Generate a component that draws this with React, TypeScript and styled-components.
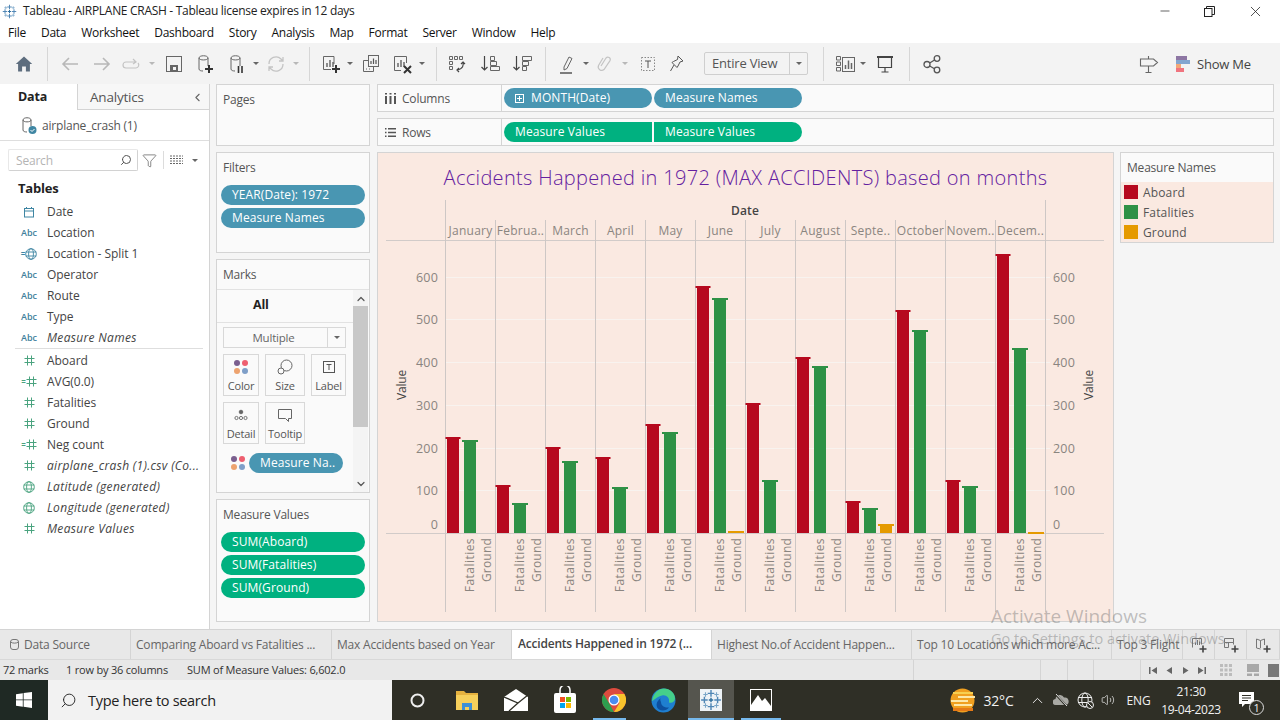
import React from 'react';
import styled, { createGlobalStyle } from 'styled-components';
import { ChevronLeft, ChevronUp, ChevronDown, Search, Filter, Minus, X, Volume2 } from 'lucide-react';

const UI = '"Open Sans", "Noto Sans", sans-serif';

const GlobalStyle = createGlobalStyle`
  html, body { margin: 0; padding: 0; background: #f5f5f5; }
  * { box-sizing: border-box; }
  body { font-family: ${UI}; font-size: 12px; color: #444; letter-spacing: -0.2px; }
`;

const Page = styled.div`
  position: relative;
  width: 1280px;
  height: 720px;
  overflow: hidden;
  display: flex;
  flex-direction: column;
`;

/* window chrome */
const TitleBar = styled.div`
  height: 22px;
  background: #fff;
  display: flex;
  align-items: center;
  padding-left: 1px;
  color: #222;
  font-size: 12px;
`;
const TitleText = styled.span`
  flex: 1;
  margin: -1px 0 0 6px;
  letter-spacing: -0.3px;
`;
const WinButton = styled.div<{ $w: number }>`
  width: ${({ $w }) => $w}px;
  display: flex;
  justify-content: center;
  color: #222;
`;
const MenuBar = styled.div`
  height: 21px;
  background: #fff;
  display: flex;
  align-items: center;
  gap: 15px;
  padding-left: 8px;
  color: #111;
  font-size: 12px;
  letter-spacing: -0.26px;
`;
const Toolbar = styled.div`
  height: 41px;
  background: #f3f3f3;
  display: flex;
  align-items: center;
  padding: 0 22px 0 8px;
  flex-shrink: 0;
`;
const ToolSlot = styled.div<{ $w: number }>`
  width: ${({ $w }) => $w}px;
  display: flex;
  justify-content: center;
  align-items: center;
  flex-shrink: 0;
`;
const ToolSep = styled.div<{ $l: number; $r: number }>`
  width: 1px;
  height: 34px;
  background: #d6d6d6;
  margin-left: ${({ $l }) => $l}px;
  margin-right: ${({ $r }) => $r}px;
  flex-shrink: 0;
`;
const Caret = styled.span<{ $dim?: boolean }>`
  width: 0;
  height: 0;
  border-left: 3px solid transparent;
  border-right: 3px solid transparent;
  border-top: 3px solid ${({ $dim }) => ($dim ? '#b8b8b8' : '#666')};
`;
const FitSelect = styled.div`
  margin-left: 16px;
  width: 104px;
  height: 23px;
  border: 1px solid #cfcfcf;
  border-radius: 2px;
  display: flex;
  align-items: center;
  color: #555;
  font-size: 13px;
  flex-shrink: 0;
`;
const FitLabel = styled.span`
  flex: 1;
  padding-left: 7px;
  margin-top: -2px;
`;
const FitArrow = styled.span`
  width: 18px;
  height: 100%;
  border-left: 1px solid #cfcfcf;
  display: flex;
  align-items: center;
  justify-content: center;
`;
const ToolSpacer = styled.div`
  flex: 1;
`;
const ShowMe = styled.div`
  display: flex;
  align-items: center;
  gap: 7px;
  width: 82px;
  margin-left: 16px;
  color: #444;
  font-size: 13px;
  white-space: nowrap;
`;

/* main area */
const Main = styled.div`
  height: 546px;
  display: flex;
  background: #f5f5f5;
  border-bottom: 1px solid #d4d4d4;
`;
const DataPane = styled.div`
  width: 210px;
  background: #fff;
  border-right: 1px solid #d4d4d4;
  display: flex;
  flex-direction: column;
  flex-shrink: 0;
`;
const PaneTabs = styled.div`
  height: 26px;
  display: flex;
`;
const DataTab = styled.div`
  width: 78px;
  padding: 4px 0 0 18px;
  font-weight: 700;
  color: #222;
  border-right: 1px solid #d4d4d4;
  font-size: 12.5px;
`;
const AnalyticsTab = styled.div`
  flex: 1;
  display: flex;
  justify-content: space-between;
  padding: 4px 5px 0 12px;
  background: #f7f7f7;
  border-bottom: 1px solid #d4d4d4;
  color: #555;
  font-size: 13.5px;
`;
const SourceRow = styled.div`
  height: 31px;
  border-bottom: 1px solid #dedede;
  display: flex;
  align-items: center;
  padding-left: 20px;
  gap: 3px;
  color: #555;
  font-size: 12px;
`;
const SearchRow = styled.div`
  display: flex;
  align-items: center;
  padding: 8px 0 0 8px;
  height: 30px;
`;
const SearchBox = styled.div`
  width: 130px;
  height: 22px;
  border: 1px solid #d2d2d2;
  border-top-color: #e8e8e8;
  border-left-color: #e8e8e8;
  border-radius: 2px;
  display: flex;
  align-items: center;
  justify-content: space-between;
  padding: 0 5px 0 7px;
  color: #b4b4b4;
  font-size: 12px;
`;
const SearchTools = styled.div`
  display: flex;
  align-items: center;
  margin-left: 4px;
`;
const ThinSep = styled.div`
  width: 1px;
  height: 18px;
  background: #dcdcdc;
  margin: 0 6px 0 6px;
`;
const TablesHead = styled.div`
  font-weight: 700;
  font-size: 13px;
  color: #222;
  padding: 8px 0 0 18px;
  height: 30px;
`;
const FieldRow = styled.div<{ $italic?: boolean }>`
  height: 21px;
  display: flex;
  align-items: center;
  padding-left: 18px;
  font-size: 12px;
  color: #444;
  font-style: ${({ $italic }) => ($italic ? 'italic' : 'normal')};
  letter-spacing: ${({ $italic }) => ($italic ? '0.32px' : '-0.04px')};
  white-space: nowrap;
`;
const FieldIcon = styled.span<{ $color: string }>`
  width: 22px;
  margin-right: 7px;
  display: flex;
  justify-content: center;
  align-items: center;
  font-size: 9px;
  font-weight: 600;
  font-style: normal;
  color: ${({ $color }) => $color};
  letter-spacing: 0;
`;
const FieldDivider = styled.div`
  height: 1px;
  margin: 0 6px 1px 15px;
  background: #dedede;
`;

const CardColumn = styled.div`
  width: 154px;
  margin-left: 6px;
  display: flex;
  flex-direction: column;
  gap: 6px;
  flex-shrink: 0;
`;
const Card = styled.div<{ $h: number }>`
  height: ${({ $h }) => $h}px;
  background: #fafafa;
  border: 1px solid #d4d4d4;
  display: flex;
  flex-direction: column;
  flex-shrink: 0;
`;
const CardTitle = styled.div`
  padding: 6px 0 0 6px;
  height: 31px;
  color: #555;
  font-size: 12px;
`;
const PillStack = styled.div`
  display: flex;
  flex-direction: column;
  gap: 3px;
  padding: 1px 4px 0 4px;
`;
const Pill = styled.div<{ $tone: 'blue' | 'green'; $w?: number; $shape?: 'left' | 'right' }>`
  height: 20px;
  width: ${({ $w }) => ($w ? `${$w}px` : '100%')};
  background: ${({ $tone }) => ($tone === 'blue' ? '#4996b2' : '#00b180')};
  border-radius: ${({ $shape }) =>
    $shape === 'left' ? '10px 0 0 10px' : $shape === 'right' ? '0 10px 10px 0' : '10px'};
  color: #fff;
  font-size: 12px;
  line-height: 18px;
  letter-spacing: 0.1px;
  padding-left: 11px;
  display: flex;
  align-items: center;
  gap: 7px;
  white-space: nowrap;
  flex-shrink: 0;
`;

const MarksTitle = styled(CardTitle)`
  height: 30px;
  border-bottom: 1px solid #e2e2e2;
`;
const MarksBody = styled.div`
  flex: 1;
  display: flex;
  min-height: 0;
`;
const MarksContent = styled.div`
  width: 136px;
  display: flex;
  flex-direction: column;
`;
const AllRow = styled.div`
  height: 33px;
  border-bottom: 1px solid #e2e2e2;
  padding-left: 36px;
  font-weight: 700;
  color: #222;
  font-size: 12.5px;
  line-height: 29px;
`;
const MarkSelect = styled.div`
  margin: 4px 0 0 6px;
  width: 123px;
  height: 21px;
  border: 1px solid #d8d8d8;
  background: #fafafa;
  display: flex;
  align-items: center;
  color: #666;
  font-size: 11.5px;
`;
const MarkSelectLabel = styled.span`
  flex: 1;
  text-align: center;
  padding-right: 4px;
`;
const MarkSelectArrow = styled.span`
  width: 18px;
  height: 100%;
  border-left: 1px solid #d8d8d8;
  display: flex;
  align-items: center;
  justify-content: center;
`;
const MarkGrid = styled.div`
  display: grid;
  grid-template-columns: 36px 40px 35px;
  grid-auto-rows: 42px;
  column-gap: 6px;
  row-gap: 6px;
  margin: 6px 0 0 6px;
`;
const MarkButton = styled.div`
  border: 1px solid #d8d8d8;
  background: #fafafa;
  display: flex;
  flex-direction: column;
  align-items: center;
  padding-top: 4px;
  font-size: 11px;
  color: #555;
  height: 42px;
  gap: 3px;
`;
const MarkPillRow = styled.div`
  display: flex;
  align-items: center;
  margin: 9px 0 0 13px;
  gap: 3px;
`;
const Scroller = styled.div`
  width: 15px;
  background: #f4f4f4;
  display: flex;
  flex-direction: column;
  align-items: center;
  color: #555;
`;
const ScrollThumb = styled.div`
  width: 100%;
  height: 121px;
  background: #c8c8c8;
  margin-bottom: auto;
`;

const RightArea = styled.div`
  flex: 1;
  margin: 0 6px 0 7px;
  display: flex;
  flex-direction: column;
  gap: 6px;
`;
const Shelf = styled.div`
  height: 28px;
  background: #fafafa;
  border: 1px solid #d4d4d4;
  display: flex;
  align-items: center;
  flex-shrink: 0;
`;
const ShelfLabel = styled.div`
  width: 124px;
  height: 100%;
  border-right: 1px solid #d4d4d4;
  display: flex;
  align-items: center;
  padding-left: 7px;
  gap: 6px;
  color: #555;
  font-size: 12px;
`;
const ShelfPills = styled.div`
  display: flex;
  margin-left: 2px;
  gap: 2px;
`;
const ViewRow = styled.div`
  display: flex;
  gap: 6px;
  flex: 1;
`;
const ChartPanel = styled.div`
  width: 737px;
  height: 470px;
  background: #fae9e1;
  border: 1px solid #d4d4d4;
  display: flex;
  flex-direction: column;
`;
const ChartTitle = styled.div`
  height: 47px;
  display: flex;
  justify-content: center;
  padding-top: 11px;
  color: #6420a0;
  font-size: 20px;
  font-weight: 300;
  letter-spacing: 0.32px;
  white-space: nowrap;
`;
const Legend = styled.div`
  width: 154px;
  height: 91px;
  border: 1px solid #d4d4d4;
  background: #fae9e1;
  display: flex;
  flex-direction: column;
`;
const LegendHead = styled.div`
  height: 29px;
  background: #fafafa;
  padding: 6px 0 0 6px;
  color: #555;
  font-size: 12px;
`;
const LegendRow = styled.div`
  height: 20px;
  display: flex;
  align-items: center;
  gap: 5px;
  padding-left: 3px;
  color: #555;
  font-size: 12px;
  letter-spacing: 0.15px;
`;
const Swatch = styled.span<{ $color: string }>`
  width: 14px;
  height: 14px;
  background: ${({ $color }) => $color};
`;

/* sheet tabs + status */
const SheetTabs = styled.div`
  height: 30px;
  background: #e8e8e8;
  display: flex;
  border-bottom: 1px solid #d8d8d8;
  color: #666;
  font-size: 12px;
`;
const SheetTab = styled.div<{ $w: number; $active?: boolean; $pad?: number }>`
  width: ${({ $w }) => $w}px;
  flex-shrink: 0;
  display: flex;
  align-items: center;
  gap: 4px;
  padding-left: ${({ $active, $pad }) => $pad ?? ($active ? 6 : 5)}px;
  padding-bottom: ${({ $active }) => ($active ? 2 : 0)}px;
  border-right: 1px solid #d4d4d4;
  background: ${({ $active }) => ($active ? '#fff' : 'transparent')};
  color: ${({ $active }) => ($active ? '#444' : '#666')};
  font-weight: ${({ $active }) => ($active ? 600 : 400)};
  white-space: nowrap;
  overflow: hidden;
`;
const SheetAction = styled.div<{ $w: number }>`
  width: ${({ $w }) => $w}px;
  flex-shrink: 0;
  display: flex;
  align-items: center;
  justify-content: center;
  border-right: 1px solid #d4d4d4;
`;
const StatusBar = styled.div`
  height: 20px;
  background: #e8e8e8;
  display: flex;
  align-items: center;
  font-size: 11px;
  color: #333;
  padding-left: 3px;
`;
const StatusItem = styled.span<{ $w: number }>`
  width: ${({ $w }) => $w}px;
  margin-top: -2px;
  white-space: nowrap;
  flex-shrink: 0;
`;
const StatusCell = styled.span<{ $w: number }>`
  width: ${({ $w }) => $w}px;
  height: 100%;
  border-left: 1px solid #d4d4d4;
  flex-shrink: 0;
`;
const StatusNav = styled.div`
  flex: 1;
  height: 100%;
  border-left: 1px solid #d4d4d4;
  display: flex;
  align-items: center;
  padding-left: 4px;
`;
const NavGlyph = styled.span`
  width: 16px;
  display: flex;
  justify-content: center;
`;
const ViewGlyph = styled.span<{ $w: number }>`
  width: ${({ $w }) => $w}px;
  display: flex;
  justify-content: center;
`;

/* taskbar */
const Taskbar = styled.div`
  height: 40px;
  background: #2f2f26;
  display: flex;
  align-items: center;
  padding-right: 6px;
  color: #f2f2f2;
  flex-shrink: 0;
`;
const StartButton = styled.div`
  width: 48px;
  height: 100%;
  background: #1f2924;
  display: flex;
  align-items: center;
  justify-content: center;
`;
const TaskSearch = styled.div`
  width: 344px;
  height: 100%;
  background: #f2f2f2;
  display: flex;
  align-items: center;
  gap: 11px;
  padding-left: 12px;
  color: #222;
  font-size: 14.5px;
  letter-spacing: -0.3px;
`;
const TaskSlot = styled.div<{ $w: number; $lit?: boolean }>`
  position: relative;
  width: ${({ $w }) => $w}px;
  height: 100%;
  flex-shrink: 0;
  display: flex;
  align-items: center;
  justify-content: center;
  background: ${({ $lit }) => ($lit ? '#55554e' : 'transparent')};
`;
const RunningBar = styled.span<{ $left: number; $w: number }>`
  position: absolute;
  left: ${({ $left }) => $left}px;
  bottom: 0;
  width: ${({ $w }) => $w}px;
  height: 2px;
  background: #76b9ed;
`;
const TraySpacer = styled.div`
  flex: 1;
`;
const TrayText = styled.span<{ $w: number; $size?: number }>`
  width: ${({ $w }) => $w}px;
  text-align: center;
  font-size: ${({ $size }) => $size ?? 12}px;
  flex-shrink: 0;
`;
const Clock = styled.div`
  width: 58px;
  padding-top: 1px;
  display: flex;
  flex-direction: column;
  align-items: center;
  font-size: 12px;
  line-height: 18px;
  letter-spacing: -0.3px;
  white-space: nowrap;
  flex-shrink: 0;
`;
const Badge = styled.span`
  position: absolute;
  right: 10px;
  bottom: 5px;
  width: 15px;
  height: 15px;
  border-radius: 50%;
  border: 1px solid #ddd;
  background: #2f2f26;
  font-size: 11px;
  line-height: 13px;
  text-align: center;
`;

/* windows watermark sits over the app */
const Watermark = styled.div`
  position: absolute;
  left: 991px;
  top: 604px;
  color: rgba(110, 110, 110, 0.42);
  pointer-events: none;
  white-space: nowrap;
`;
const WatermarkBig = styled.div`
  font-size: 19px;
  line-height: 25px;
  letter-spacing: 0;
`;
const WatermarkSmall = styled.div`
  font-size: 14.5px;
  line-height: 20px;
  letter-spacing: 0;
`;

/* ---- drawings ---- */
const Ico: React.FC<{ w?: number; h?: number; children: React.ReactNode }> = ({ w = 20, h = 20, children }) => (
  <svg width={w} height={h} viewBox={`0 0 ${w} ${h}`} fill="none" stroke="#666" strokeWidth={1}>
    {children}
  </svg>
);

const TableauMark: React.FC<{ size: number; tile?: boolean }> = ({ size, tile }) => (
  <svg width={size} height={size} viewBox="0 0 20 20" stroke="#4f86b5" strokeWidth={1.3}>
    {tile && <rect x="0" y="0" width="20" height="20" fill="#eef3f7" stroke="none" />}
    <path d="M10 1v6M7 4h6M10 13v6M7 16h6M1 10h6M4 7v6M13 10h6M16 7v6" />
    <path d="M5 3v4M3 5h4M15 3v4M13 5h4M5 13v4M3 15h4M15 13v4M13 15h4" stroke="#7aa6c8" strokeWidth={1} />
    <path d="M10 8v4M8 10h4" stroke="#2f6f9f" />
  </svg>
);

const Cyl = () => <path d="M4 4c0-3 9-3 9 0v8M4 4v11c0 1.5 2 2 4 2M4 4c0 2.6 9 2.6 9 0" />;
const BarsSmall = () => <path d="M6 13V9M9 13V6M12 13V8" stroke="#555" strokeWidth={1.3} />;

const icons: Record<string, React.ReactNode> = {
  home: (
    <svg width="18" height="18" viewBox="0 0 18 18" fill="#5d6d7e">
      <path d="M9 1.5 0.8 9h2.3v7.500h4v-5h3.800v5h4V9h2.300z" />
    </svg>
  ),
  back: (
    <Ico>
      <path d="M18 10H3M9 4l-6 6 6 6" stroke="#b8b8b8" strokeWidth={1.6} />
    </Ico>
  ),
  forward: (
    <Ico>
      <path d="M2 10h15M11 4l6 6-6 6" stroke="#b8b8b8" strokeWidth={1.6} />
    </Ico>
  ),
  redo: (
    <Ico>
      <path d="M14 8H5a3 3 0 0 0 0 6h10a3 3 0 0 0 2-5M12 5l3 3-3 2" stroke="#c4c4c4" strokeWidth={1.2} />
    </Ico>
  ),
  save: (
    <Ico>
      <rect x="2.5" y="2.5" width="15" height="15" stroke="#666" />
      <rect x="6" y="11" width="8" height="6" fill="#666" stroke="none" />
      <rect x="9" y="13" width="3" height="3" fill="#f3f3f3" stroke="none" />
    </Ico>
  ),
  newSource: (
    <Ico>
      <Cyl />
      <path d="M14 11v8M10 15h8" stroke="#333" strokeWidth={2} />
    </Ico>
  ),
  pause: (
    <Ico>
      <Cyl />
      <path d="M11.5 12v7M15 12v7" stroke="#333" strokeWidth={1.6} />
    </Ico>
  ),
  refresh: (
    <Ico>
      <path d="M3 10a7 7 0 0 1 12-5l2 2M17 10a7 7 0 0 1-12 5l-2-2M17 3v4h-4M3 17v-4h4" stroke="#c4c4c4" strokeWidth={1.3} />
    </Ico>
  ),
  newSheet: (
    <Ico>
      <path d="M13 2.500H2.500v13H10M13 2.500V10" />
      <BarsSmall />
      <path d="M15 11v8M11 15h8" stroke="#333" strokeWidth={2} />
    </Ico>
  ),
  duplicate: (
    <Ico>
      <rect x="7.5" y="1.5" width="10" height="11" />
      <path d="M10 10V7M12.500 10V4.500M15 10V6" strokeWidth={1.2} stroke="#555" />
      <path d="M7 6.500H2.500v11h10V13M5 15h1M8 15h1" />
    </Ico>
  ),
  clear: (
    <Ico>
      <path d="M14.500 9V2.500h-12v14H9" />
      <BarsSmall />
      <path d="M12 12l7 7M19 12l-7 7" stroke="#333" strokeWidth={2} />
    </Ico>
  ),
  swap: (
    <Ico>
      <path d="M2.500 2.500h3v3h-3zM7.500 2.500h3v3h-3zM12.500 2.500h3v3h-3zM2.500 7.500h3v3h-3zM2.500 12.500h3v3h-3z" />
      <path d="M16 8c1 3 0 7-6 8M12 14l-2 2 2 2M14 10l2-2 2 2" stroke="#444" strokeWidth={1.2} />
    </Ico>
  ),
  sortAsc: (
    <Ico>
      <path d="M4.500 2v14M1.500 13l3 3 3-3" stroke="#444" strokeWidth={1.2} />
      <path d="M10.500 2.500h4v4h-4zM10.500 7.500h6v4h-6zM10.500 12.500h9v4h-9z" />
    </Ico>
  ),
  sortDesc: (
    <Ico>
      <path d="M4.500 2v14M1.500 13l3 3 3-3" stroke="#444" strokeWidth={1.2} />
      <path d="M10.500 2.500h9v4h-9zM10.500 7.500h6v4h-6zM10.500 12.500h4v4h-4z" />
    </Ico>
  ),
  highlight: (
    <Ico>
      <path d="M7 13 12 3l3 1.500-5 10-3 1.500z" />
      <path d="M3 19h12" stroke="#555" strokeWidth={1.5} />
    </Ico>
  ),
  clip: (
    <Ico>
      <path d="M6 12l5-8a2.400 2.400 0 0 1 4 2.600L9 15.500a3.500 3.500 0 0 1-5.500-4l4.500-7.500" stroke="#c4c4c4" strokeWidth={1.2} />
    </Ico>
  ),
  textBox: (
    <Ico>
      <rect x="3.5" y="3.5" width="13" height="13" strokeDasharray="1.5 1.5" stroke="#888" />
      <path d="M7 7h6M10 7v7" stroke="#555" />
    </Ico>
  ),
  pin: (
    <Ico>
      <path d="M11 2l5 5-3 1-2 4-1 1.500-5-5 1.500-1 4-2zM7 11l-3.500 6" stroke="#555" />
    </Ico>
  ),
  cards: (
    <Ico w={22}>
      <path d="M1.500 2.500h4v3.500h-4zM1.500 8h4v3.500h-4zM1.500 13.500h4V17h-4z" />
      <rect x="7.5" y="3.5" width="12" height="14" />
      <path d="M10.500 15v-4M13.500 15V6.500M16.500 15v-6" strokeWidth={1.5} />
    </Ico>
  ),
  present: (
    <Ico>
      <path d="M2 3h16" stroke="#444" strokeWidth={2} />
      <path d="M3.500 3v10.500h13V3M10 14v4M6.500 18h7" stroke="#444" strokeWidth={1.2} />
    </Ico>
  ),
  share: (
    <Ico>
      <circle cx="5" cy="10.5" r="3" strokeWidth={1.3} stroke="#555" />
      <circle cx="15" cy="4.500" r="2.800" strokeWidth={1.3} stroke="#555" />
      <circle cx="15" cy="16" r="2.800" strokeWidth={1.3} stroke="#555" />
      <path d="M7.700 9 12.500 6M7.700 12l4.800 2.800" strokeWidth={1.3} stroke="#555" />
    </Ico>
  ),
  guide: (
    <Ico>
      <path d="M1.500 5h13l4 3.500-4 3.500h-13zM9.500 2v3M9.500 12v6.500M6.500 18.500h6" stroke="#666" strokeWidth={1.1} />
    </Ico>
  ),
};

type ToolItem =
  | { kind: 'icon'; w: number; name: string }
  | { kind: 'caret'; w: number; dim?: boolean }
  | { kind: 'sep'; l: number; r: number };

const leftTools: ToolItem[] = [
  { kind: 'icon', w: 32, name: 'home' },
  { kind: 'sep', l: 7, r: 6 },
  { kind: 'icon', w: 32, name: 'back' },
  { kind: 'icon', w: 32, name: 'forward' },
  { kind: 'icon', w: 26, name: 'redo' },
  { kind: 'caret', w: 16, dim: true },
  { kind: 'icon', w: 28, name: 'save' },
  { kind: 'icon', w: 34, name: 'newSource' },
  { kind: 'icon', w: 30, name: 'pause' },
  { kind: 'caret', w: 8 },
  { kind: 'icon', w: 32, name: 'refresh' },
  { kind: 'caret', w: 8, dim: true },
  { kind: 'sep', l: 9, r: 5 },
  { kind: 'icon', w: 32, name: 'newSheet' },
  { kind: 'caret', w: 6 },
  { kind: 'icon', w: 36, name: 'duplicate' },
  { kind: 'icon', w: 26, name: 'clear' },
  { kind: 'caret', w: 14 },
  { kind: 'sep', l: 7, r: 4 },
  { kind: 'icon', w: 32, name: 'swap' },
  { kind: 'icon', w: 34, name: 'sortAsc' },
  { kind: 'icon', w: 30, name: 'sortDesc' },
  { kind: 'sep', l: 8, r: 6 },
  { kind: 'icon', w: 30, name: 'highlight' },
  { kind: 'caret', w: 8 },
  { kind: 'icon', w: 30, name: 'clip' },
  { kind: 'caret', w: 10, dim: true },
  { kind: 'icon', w: 36, name: 'textBox' },
  { kind: 'icon', w: 22, name: 'pin' },
];

const renderTool = (t: ToolItem, i: number) => {
  if (t.kind === 'sep') return <ToolSep key={i} $l={t.l} $r={t.r} />;
  if (t.kind === 'caret')
    return (
      <ToolSlot key={i} $w={t.w}>
        <Caret $dim={t.dim} />
      </ToolSlot>
    );
  return (
    <ToolSlot key={i} $w={t.w}>
      {icons[t.name]}
    </ToolSlot>
  );
};

const Hash = () => (
  <svg width="11" height="11" viewBox="0 0 11 11" stroke="#4aa37f" strokeWidth={1}>
    <path d="M3.500 0.500v10M7.500 0.500v10M0.500 3.500h10M0.500 7.500h10" />
  </svg>
);
const GlobeGlyph = ({ color = '#4aa37f' }: { color?: string }) => (
  <svg width="12" height="12" viewBox="0 0 12 12" fill="none" stroke={color} strokeWidth={0.9}>
    <circle cx="6" cy="6" r="5.3" />
    <ellipse cx="6" cy="6" rx="2.4" ry="5.3" />
    <path d="M0.700 4h10.600M0.700 8h10.600" />
  </svg>
);
const Calendar = () => (
  <svg width="12" height="12" viewBox="0 0 12 12" fill="none" stroke="#3f86a3" strokeWidth={1}>
    <rect x="1.5" y="2.5" width="9" height="8.5" />
    <path d="M1.500 5h9M3.500 1v2M8.500 1v2" />
  </svg>
);
const EqualMark = styled.span<{ $color: string }>`
  color: ${({ $color }) => $color};
  font-size: 8px;
  line-height: 1;
`;

type FieldKind = 'date' | 'abc' | 'geoCalc' | 'hash' | 'hashCalc' | 'globe';
const dimensions: { name: string; kind: FieldKind; italic?: boolean }[] = [
  { name: 'Date', kind: 'date' },
  { name: 'Location', kind: 'abc' },
  { name: 'Location - Split 1', kind: 'geoCalc' },
  { name: 'Operator', kind: 'abc' },
  { name: 'Route', kind: 'abc' },
  { name: 'Type', kind: 'abc' },
  { name: 'Measure Names', kind: 'abc', italic: true },
];
const measures: { name: string; kind: FieldKind; italic?: boolean }[] = [
  { name: 'Aboard', kind: 'hash' },
  { name: 'AVG(0.0)', kind: 'hashCalc' },
  { name: 'Fatalities', kind: 'hash' },
  { name: 'Ground', kind: 'hash' },
  { name: 'Neg count', kind: 'hashCalc' },
  { name: 'airplane_crash (1).csv (Co...', kind: 'hash', italic: true },
  { name: 'Latitude (generated)', kind: 'globe', italic: true },
  { name: 'Longitude (generated)', kind: 'globe', italic: true },
  { name: 'Measure Values', kind: 'hash', italic: true },
];

const fieldGlyph = (k: FieldKind) => {
  switch (k) {
    case 'date':
      return <Calendar />;
    case 'abc':
      return 'Abc';
    case 'geoCalc':
      return (
        <>
          <EqualMark $color="#3f86a3">=</EqualMark>
          <GlobeGlyph color="#3f86a3" />
        </>
      );
    case 'hash':
      return <Hash />;
    case 'hashCalc':
      return (
        <>
          <EqualMark $color="#4aa37f">=</EqualMark>
          <Hash />
        </>
      );
    default:
      return <GlobeGlyph />;
  }
};

const Field: React.FC<{ name: string; kind: FieldKind; italic?: boolean }> = ({ name, kind, italic }) => (
  <FieldRow $italic={italic}>
    <FieldIcon $color={kind === 'abc' ? '#3f7f9c' : '#4aa37f'}>{fieldGlyph(kind)}</FieldIcon>
    {name}
  </FieldRow>
);

const ColorDots: React.FC<{ size?: number }> = ({ size = 16 }) => (
  <svg width={size} height={size} viewBox="0 0 16 16">
    <circle cx="4" cy="4" r="3" fill="#7b5f8f" />
    <circle cx="12" cy="4" r="3" fill="#ee5f6f" />
    <circle cx="4" cy="12" r="3" fill="#eda36f" />
    <circle cx="12" cy="12" r="3" fill="#7f9fc8" />
  </svg>
);

/* ---- chart ---- */
const RED = '#b6091e';
const GREEN = '#2e9146';
const ORANGE = '#e59a00';
const AXIS_Y = 533;
const months: { label: string; a: number; f: number; g?: number }[] = [
  { label: 'January', a: 437, f: 440 },
  { label: 'Februa..', a: 485, f: 503 },
  { label: 'March', a: 447, f: 461 },
  { label: 'April', a: 457, f: 487 },
  { label: 'May', a: 424, f: 432 },
  { label: 'June', a: 286, f: 298, g: 531 },
  { label: 'July', a: 403, f: 480 },
  { label: 'August', a: 357, f: 366 },
  { label: 'Septe..', a: 501, f: 508, g: 524 },
  { label: 'October', a: 310, f: 330 },
  { label: 'Novem..', a: 480, f: 486 },
  { label: 'Decem..', a: 254, f: 348, g: 532 },
];
const ticks: [string, number][] = [
  ['600', 277],
  ['500', 319],
  ['400', 362],
  ['300', 405],
  ['200', 448],
  ['100', 490],
];
const axisFont = { fontFamily: UI, fontSize: 12.5, fill: '#8a8580', letterSpacing: 0.2 };

const Bar: React.FC<{ x: number; w: number; cap: number; top: number; color: string }> = ({ x, w, cap, top, color }) => (
  <g fill={color}>
    <rect x={x} y={top + 2} width={w} height={AXIS_Y - top - 2} />
    <rect x={x - (cap - w) / 2} y={top} width={cap} height={2} />
  </g>
);

const Chart = () => (
  <svg width="735" height="421" viewBox="378 200 735 421" style={{ display: 'block' }}>
    {ticks.map(([, y]) => (
      <line key={y} x1={445} x2={1050} y1={y + 0.5} y2={y + 0.5} stroke="#f8f3ef" />
    ))}
    <line x1={386} x2={1104} y1={240.5} y2={240.5} stroke="#d1cbc9" />
    <line x1={386} x2={1104} y1={533.5} y2={533.5} stroke="#d1cbc9" />
    {Array.from({ length: 13 }, (_, i) => {
      const x = 445.5 + i * 50;
      const outer = i === 0 || i === 12;
      return <line key={i} x1={x} x2={x} y1={outer ? 200 : 220} y2={612} stroke="#cdc7c5" />;
    })}
    <text x={745} y={215} textAnchor="middle" fontFamily={UI} fontSize={12} fontWeight={600} fill="#444" letterSpacing={0.1}>
      Date
    </text>
    {months.map((m, i) => {
      const x0 = 445 + i * 50;
      return (
        <g key={m.label}>
          <text x={x0 + 25.5} y={235} textAnchor="middle" fontFamily={UI} fontSize={12} fill="#8a8580" letterSpacing={0.25}>
            {m.label}
          </text>
          <Bar x={x0 + 2} w={12} cap={15} top={m.a} color={RED} />
          <Bar x={x0 + 19} w={12} cap={16} top={m.f} color={GREEN} />
          {m.g !== undefined && <Bar x={x0 + 35} w={12} cap={16} top={m.g} color={ORANGE} />}
          <path d={`M${x0 + 17} 534v3M${x0 + 34} 534v3`} stroke="#f8f3ef" />
          <text transform={`translate(${x0 + 29} 538) rotate(-90)`} textAnchor="end" {...axisFont} fontSize={12} letterSpacing={0.45}>
            Fatalities
          </text>
          <text transform={`translate(${x0 + 46} 538) rotate(-90)`} textAnchor="end" {...axisFont} fontSize={12}>
            Ground
          </text>
        </g>
      );
    })}
    {ticks.map(([label, y]) => (
      <g key={label}>
        <text x={438} y={y + 5} textAnchor="end" {...axisFont}>
          {label}
        </text>
        <text x={1053} y={y + 5} {...axisFont}>
          {label}
        </text>
      </g>
    ))}
    <text x={438} y={529} textAnchor="end" {...axisFont}>
      0
    </text>
    <text x={1053} y={529} {...axisFont}>
      0
    </text>
    <text transform="translate(406 385) rotate(-90)" textAnchor="middle" fontFamily={UI} fontSize={12} fontWeight={500} fill="#444">
      Value
    </text>
    <text transform="translate(1093 385) rotate(-90)" textAnchor="middle" fontFamily={UI} fontSize={12} fontWeight={500} fill="#444">
      Value
    </text>
  </svg>
);

/* ---- small bottom glyphs ---- */
const AddSheet: React.FC<{ kind: 'sheet' | 'dash' | 'story' }> = ({ kind }) => (
  <Ico w={18} h={18}>
    {kind === 'sheet' && <path d="M2.500 11.500v-9h9v6M5.500 9V6.500M7.500 9V4M9.500 9V5.500" stroke="#777" />}
    {kind === 'dash' && <path d="M2.500 2.500h9v4h-9zM2.500 6.500v5h4v-5M6.500 6.500h5v2" stroke="#777" />}
    {kind === 'story' && <path d="M2.500 3l4 1.500 4-1.500v6M2.500 3v9l4 1M6.500 4.500V12" stroke="#777" />}
    <path d="M13 9.500v7M9.500 13h7" stroke="#444" strokeWidth={1.6} />
  </Ico>
);

const NavIcon: React.FC<{ d: string }> = ({ d }) => (
  <svg width="9" height="9" viewBox="0 0 9 9" fill="#666">
    <path d={d} />
  </svg>
);

const RestoreIcon = () => (
  <svg width="11" height="11" viewBox="0 0 11 11" fill="none" stroke="#222">
    <rect x="0.5" y="2.5" width="7.5" height="8" />
    <path d="M2.500 2.500V0.500h8V8.500H8" />
  </svg>
);
const WindowsLogo = () => (
  <svg width="16" height="16" viewBox="0 0 16 16" fill="#fff">
    <path d="M0 2.200 6.800 1.200V7.500H0zM7.600 1.100 16 0v7.500H7.600zM0 8.300h6.800v6.400L0 13.800zM7.600 8.300H16V16l-8.400-1.200z" />
  </svg>
);
const ExplorerIcon = () => (
  <svg width="24" height="22" viewBox="0 0 24 22">
    <path d="M1 2h8l2 2h12v4H1z" fill="#e5b13f" />
    <rect x="1" y="6" width="22" height="15" fill="#f6cf5b" />
    <path d="M7 14h10v7h-3v-3h-4v3H7z" fill="#3d8fd6" />
  </svg>
);
const MailIcon = () => (
  <svg width="24" height="22" viewBox="0 0 24 22">
    <path d="M0 8 12 0l12 8v14H0z" fill="#fff" />
    <path d="M0 8l14 6 10-8M5 22l9-8" fill="none" stroke="#2f2f26" strokeWidth={1.3} />
  </svg>
);
const StoreIcon = () => (
  <svg width="24" height="28" viewBox="0 0 24 28">
    <path d="M7 7V4a5 5 0 0 1 10 0v3" fill="none" stroke="#fff" strokeWidth={1.5} />
    <rect x="1" y="7" width="22" height="20" rx="2" fill="#fff" />
    <rect x="7" y="11" width="5" height="5" fill="#f25022" />
    <rect x="13" y="11" width="5" height="5" fill="#7fba00" />
    <rect x="7" y="17" width="5" height="5" fill="#00a4ef" />
    <rect x="13" y="17" width="5" height="5" fill="#ffb900" />
  </svg>
);
const ChromeIcon = () => (
  <svg width="24" height="24" viewBox="0 0 24 24">
    <circle cx="12" cy="12" r="12" fill="#dd4b3e" />
    <path d="M12 24A12 12 0 0 1 1.600 6L7 15z" fill="#2e9e4f" />
    <path d="M12 24 17.500 15l-5.500-9h10.400A12 12 0 0 1 12 24z" fill="#f8c32c" />
    <circle cx="12" cy="12" r="5.500" fill="#fff" />
    <circle cx="12" cy="12" r="4.300" fill="#4a8cf0" />
  </svg>
);
const EdgeIcon = () => (
  <svg width="25" height="25" viewBox="0 0 25 25">
    <circle cx="12.5" cy="12.5" r="12" fill="#1f7fd0" />
    <path d="M1 13C2 5 8 .5 13 .5c6 0 11 4.500 11 10 0 3-3 5-6 4 1-5-3-8-7-7-5 1-8 5-10 5.500z" fill="#45cf8a" />
    <path d="M10 14c0 4 4 6 8 5.500-2 3-7 4-10 2S4 14 10 10c-1 1-1 2 0 4z" fill="#0d4f9e" />
  </svg>
);
const PhotoIcon = () => (
  <svg width="22" height="22" viewBox="0 0 22 22">
    <rect x="0.5" y="0.5" width="21" height="21" fill="#2f2f26" stroke="#fff" />
    <path d="M1 21v-5L8 6l4 6 3-3 6 8v4z" fill="#fff" />
  </svg>
);
const SunIcon = () => (
  <svg width="26" height="25" viewBox="0 0 26 25">
    <circle cx="12.5" cy="12.5" r="12" fill="#f0a020" />
    <path d="M3 4h20v2H3z" fill="#f8cf50" />
    <path d="M8 8h17v2H8zM1 12h17v2H1zM4 16h18v2H4z" fill="#fde8a8" />
    <path d="M3 20h20v3H3z" fill="#e67b16" />
  </svg>
);
const CloudMuted = () => (
  <svg width="16" height="16" viewBox="0 0 16 16">
    <path d="M3 13a3 3 0 0 1-.500-6 4.500 4.500 0 0 1 8.500-1.500A3.800 3.800 0 0 1 12.500 13z" fill="#a9a9a4" />
    <path d="M2 1.500 14 14.500" stroke="#2f2f26" strokeWidth={2} />
    <path d="M3 2 14 14" stroke="#ddd" strokeWidth={1} />
  </svg>
);
const GlobeOff = () => (
  <svg width="17" height="17" viewBox="0 0 17 17" fill="none" stroke="#eee" strokeWidth={1}>
    <circle cx="8" cy="8" r="7" />
    <ellipse cx="8" cy="8" rx="3.2" ry="7" />
    <path d="M1 5.500h14M1 10.500h14" />
    <circle cx="13" cy="13" r="3.5" fill="#2f2f26" />
    <path d="M11 11l4 4" />
  </svg>
);
const NoteIcon = () => (
  <svg width="18" height="18" viewBox="0 0 18 18" fill="#fff">
    <path d="M1 1h15v12H7l-3 3v-3H1z" />
    <path d="M4 4.500h9M4 7h9M4 9.500h6" stroke="#2f2f26" strokeWidth={1} />
  </svg>
);

const App: React.FC = () => (
  <Page>
    <GlobalStyle />
    <TitleBar>
      <ToolSlot $w={16}>
        <TableauMark size={15} />
      </ToolSlot>
      <TitleText>Tableau - AIRPLANE CRASH - Tableau license expires in 12 days</TitleText>
      <WinButton $w={46}>
        <Minus size={14} strokeWidth={1.2} />
      </WinButton>
      <WinButton $w={42}>
        <RestoreIcon />
      </WinButton>
      <WinButton $w={50}>
        <X size={17} strokeWidth={1.1} />
      </WinButton>
    </TitleBar>
    <MenuBar>
      {['File', 'Data', 'Worksheet', 'Dashboard', 'Story', 'Analysis', 'Map', 'Format', 'Server', 'Window', 'Help'].map(
        (m) => (
          <span key={m}>{m}</span>
        ),
      )}
    </MenuBar>
    <Toolbar>
      {leftTools.map(renderTool)}
      <FitSelect>
        <FitLabel>Entire View</FitLabel>
        <FitArrow>
          <Caret />
        </FitArrow>
      </FitSelect>
      <ToolSep $l={15} $r={8} />
      <ToolSlot $w={28}>{icons.cards}</ToolSlot>
      <ToolSlot $w={6}>
        <Caret />
      </ToolSlot>
      <ToolSlot $w={38}>{icons.present}</ToolSlot>
      <ToolSep $l={5} $r={0} />
      <ToolSlot $w={44}>{icons.share}</ToolSlot>
      <ToolSpacer />
      <ToolSlot $w={22}>{icons.guide}</ToolSlot>
      <ShowMe>
        <svg width="14" height="18" viewBox="0 0 14 18">
          <rect x="0" y="1" width="11" height="4" fill="#8d76a3" />
          <rect x="0" y="5" width="14" height="4" fill="#83a5cf" />
          <rect x="0" y="9" width="5" height="4" fill="#f2a777" />
          <rect x="0" y="13" width="8" height="4" fill="#f0747f" />
        </svg>
        Show Me
      </ShowMe>
    </Toolbar>
    <Main>
      <DataPane>
        <PaneTabs>
          <DataTab>Data</DataTab>
          <AnalyticsTab>
            Analytics
            <ChevronLeft size={13} color="#666" style={{ marginTop: 3 }} />
          </AnalyticsTab>
        </PaneTabs>
        <SourceRow>
          <svg width="19" height="19" viewBox="0 0 19 19" fill="none" stroke="#666">
            <path d="M3 4c0-3 8-3 8 0v6M3 4v10c0 1.500 2 2 4 2M3 4c0 2.500 8 2.500 8 0" />
            <circle cx="12.5" cy="14" r="4" fill="#3f86a3" stroke="none" />
            <path d="M10.500 14l1.500 1.500 2.500-2.500" stroke="#fff" />
          </svg>
          airplane_crash (1)
        </SourceRow>
        <SearchRow>
          <SearchBox>
            Search
            <Search size={12} color="#555" style={{ transform: 'scaleX(-1)' }} />
          </SearchBox>
          <SearchTools>
            <Filter size={15} color="#555" strokeWidth={1.1} />
            <ThinSep />
            <svg width="13" height="10" viewBox="0 0 13 10" stroke="#666" strokeDasharray="2 1">
              <path d="M0 1h13M0 3.500h13M0 6h13M0 8.500h13" />
            </svg>
            <ToolSlot $w={24}>
              <Caret />
            </ToolSlot>
          </SearchTools>
        </SearchRow>
        <TablesHead>Tables</TablesHead>
        {dimensions.map((f) => (
          <Field key={f.name} {...f} />
        ))}
        <FieldDivider />
        {measures.map((f) => (
          <Field key={f.name} {...f} />
        ))}
      </DataPane>
      <CardColumn>
        <Card $h={62}>
          <CardTitle>Pages</CardTitle>
        </Card>
        <Card $h={101}>
          <CardTitle>Filters</CardTitle>
          <PillStack>
            <Pill $tone="blue">YEAR(Date): 1972</Pill>
            <Pill $tone="blue">Measure Names</Pill>
          </PillStack>
        </Card>
        <Card $h={234}>
          <MarksTitle>Marks</MarksTitle>
          <MarksBody>
            <MarksContent>
              <AllRow>All</AllRow>
              <MarkSelect>
                <MarkSelectLabel>Multiple</MarkSelectLabel>
                <MarkSelectArrow>
                  <Caret />
                </MarkSelectArrow>
              </MarkSelect>
              <MarkGrid>
                <MarkButton>
                  <ColorDots />
                  Color
                </MarkButton>
                <MarkButton>
                  <svg width="16" height="16" viewBox="0 0 16 16" fill="none" stroke="#666">
                    <circle cx="9.5" cy="6.5" r="5.5" />
                    <circle cx="4" cy="12" r="3" fill="#fafafa" />
                  </svg>
                  Size
                </MarkButton>
                <MarkButton>
                  <svg width="16" height="16" viewBox="0 0 16 16" fill="none" stroke="#555">
                    <rect x="2.5" y="2.5" width="11" height="11" />
                    <path d="M5.500 5.500h5M8 5.500v5.500" />
                  </svg>
                  Label
                </MarkButton>
                <MarkButton>
                  <svg width="16" height="16" viewBox="0 0 16 16" fill="none" stroke="#666" strokeWidth={0.9}>
                    <circle cx="8" cy="5" r="1.8" fill="#666" />
                    <circle cx="3.5" cy="11" r="1.6" />
                    <circle cx="8" cy="11" r="1.6" />
                    <circle cx="12.5" cy="11" r="1.6" />
                  </svg>
                  Detail
                </MarkButton>
                <MarkButton>
                  <svg width="16" height="16" viewBox="0 0 16 16" fill="none" stroke="#666">
                    <path d="M1.500 2.500h13v9h-3v3l-3-3h-7z" />
                  </svg>
                  Tooltip
                </MarkButton>
              </MarkGrid>
              <MarkPillRow>
                <ColorDots />
                <Pill $tone="blue" $w={94}>
                  Measure Na..
                </Pill>
              </MarkPillRow>
            </MarksContent>
            <Scroller>
              <ChevronUp size={12} strokeWidth={2.4} style={{ margin: '3px 0 1px' }} />
              <ScrollThumb />
              <ChevronDown size={12} strokeWidth={2.4} style={{ margin: '1px 0 2px' }} />
            </Scroller>
          </MarksBody>
        </Card>
        <Card $h={123}>
          <CardTitle>Measure Values</CardTitle>
          <PillStack>
            <Pill $tone="green">SUM(Aboard)</Pill>
            <Pill $tone="green">SUM(Fatalities)</Pill>
            <Pill $tone="green">SUM(Ground)</Pill>
          </PillStack>
        </Card>
      </CardColumn>
      <RightArea>
        <Shelf>
          <ShelfLabel>
            <svg width="11" height="11" viewBox="0 0 11 11" fill="#555">
              <path d="M0 3h2v8H0zM4.500 3h2v8h-2zM9 3h2v8H9zM0 0h2v1.500H0zM4.500 0h2v1.500h-2zM9 0h2v1.500H9z" />
            </svg>
            Columns
          </ShelfLabel>
          <ShelfPills>
            <Pill $tone="blue" $w={148}>
              <svg width="9" height="9" viewBox="0 0 9 9" fill="none" stroke="#fff">
                <rect x="0.5" y="0.5" width="8" height="8" />
                <path d="M4.500 2v5M2 4.500h5" />
              </svg>
              MONTH(Date)
            </Pill>
            <Pill $tone="blue" $w={148}>
              Measure Names
            </Pill>
          </ShelfPills>
        </Shelf>
        <Shelf>
          <ShelfLabel>
            <svg width="11" height="11" viewBox="0 0 11 11" fill="#555">
              <path d="M0 1h1.500v1.500H0zM3 1h8v1.500H3zM0 4.800h1.500v1.500H0zM3 4.800h8v1.500H3zM0 8.500h1.500V10H0zM3 8.500h8V10H3z" />
            </svg>
            Rows
          </ShelfLabel>
          <ShelfPills>
            <Pill $tone="green" $w={148} $shape="left">
              Measure Values
            </Pill>
            <Pill $tone="green" $w={148} $shape="right">
              Measure Values
            </Pill>
          </ShelfPills>
        </Shelf>
        <ViewRow>
          <ChartPanel>
            <ChartTitle>Accidents Happened in 1972 (MAX ACCIDENTS) based on months</ChartTitle>
            <Chart />
          </ChartPanel>
          <Legend>
            <LegendHead>Measure Names</LegendHead>
            <LegendRow>
              <Swatch $color={RED} />
              Aboard
            </LegendRow>
            <LegendRow>
              <Swatch $color={GREEN} />
              Fatalities
            </LegendRow>
            <LegendRow>
              <Swatch $color={ORANGE} />
              Ground
            </LegendRow>
          </Legend>
        </ViewRow>
      </RightArea>
    </Main>
    <SheetTabs>
      <SheetTab $w={131} $pad={9}>
        <svg width="11" height="13" viewBox="0 0 11 13" fill="none" stroke="#777">
          <rect x="1.5" y="1.5" width="8" height="10" rx="2.5" />
          <path d="M1.500 4c2 1.500 6 1.500 8 0" />
        </svg>
        Data Source
      </SheetTab>
      <SheetTab $w={201}>Comparing Aboard vs Fatalities ...</SheetTab>
      <SheetTab $w={180}>Max Accidents based on Year</SheetTab>
      <SheetTab $w={200} $active>
        Accidents Happened in 1972 (...
      </SheetTab>
      <SheetTab $w={200}>Highest No.of Accident Happen...</SheetTab>
      <SheetTab $w={200}>Top 10 Locations which more Ac...</SheetTab>
      <SheetTab $w={71}>Top 3 Flight</SheetTab>
      <SheetAction $w={32}>
        <AddSheet kind="sheet" />
      </SheetAction>
      <SheetAction $w={32}>
        <AddSheet kind="dash" />
      </SheetAction>
      <SheetAction $w={33}>
        <AddSheet kind="story" />
      </SheetAction>
    </SheetTabs>
    <StatusBar>
      <StatusItem $w={63}>72 marks</StatusItem>
      <StatusItem $w={121}>1 row by 36 columns</StatusItem>
      <StatusItem $w={726}>SUM of Measure Values: 6,602.0</StatusItem>
      <StatusCell $w={127} />
      <StatusCell $w={27} />
      <StatusCell $w={26} />
      <StatusCell $w={47} />
      <StatusNav>
        <NavGlyph>
          <NavIcon d="M0 1h1.500v7H0zM8 1v7L2.500 4.500z" />
        </NavGlyph>
        <NavGlyph>
          <NavIcon d="M7 1v7L1.500 4.500z" />
        </NavGlyph>
        <NavGlyph>
          <NavIcon d="M2 1v7l5.500-3.500z" />
        </NavGlyph>
        <NavGlyph>
          <NavIcon d="M1 1v7l5.500-3.500zM7.500 1H9v7H7.500z" />
        </NavGlyph>
        <ViewGlyph $w={34}>
          <svg width="12" height="12" viewBox="0 0 12 12" fill="#bcbcbc">
            <path d="M0 0h3v3H0zM4.500 0h3v3h-3zM9 0h3v3H9zM0 4.500h3v3H0zM4.500 4.500h3v3h-3zM9 4.500h3v3H9zM0 9h3v3H0zM4.500 9h3v3h-3zM9 9h3v3H9z" />
          </svg>
        </ViewGlyph>
        <ViewGlyph $w={20}>
          <svg width="12" height="12" viewBox="0 0 12 12" fill="#a8a8a8">
            <path d="M0 0h12v8H0zM0 9.500h5V12H0zM7 9.500h5V12H7z" />
          </svg>
        </ViewGlyph>
        <ViewGlyph $w={20}>
          <svg width="11" height="13" viewBox="0 0 11 13" fill="#777">
            <path d="M0 0h11v13H0z" />
          </svg>
        </ViewGlyph>
      </StatusNav>
    </StatusBar>
    <Taskbar>
      <StartButton>
        <WindowsLogo />
      </StartButton>
      <TaskSearch>
        <Search size={17} color="#222" strokeWidth={1.3} style={{ transform: 'scaleX(-1)' }} />
        Type here to search
      </TaskSearch>
      <TaskSlot $w={50}>
        <svg width="15" height="15" viewBox="0 0 15 15" fill="none" stroke="#eee" strokeWidth={2}>
          <circle cx="7.5" cy="7.5" r="6" />
        </svg>
      </TaskSlot>
      <TaskSlot $w={49}>
        <ExplorerIcon />
      </TaskSlot>
      <TaskSlot $w={49}>
        <MailIcon />
      </TaskSlot>
      <TaskSlot $w={49}>
        <StoreIcon />
      </TaskSlot>
      <TaskSlot $w={49}>
        <ChromeIcon />
        <RunningBar $left={4} $w={33} />
      </TaskSlot>
      <TaskSlot $w={50}>
        <EdgeIcon />
      </TaskSlot>
      <TaskSlot $w={46} $lit>
        <TableauMark size={22} tile />
        <RunningBar $left={0} $w={46} />
      </TaskSlot>
      <TaskSlot $w={7} />
      <TaskSlot $w={40}>
        <PhotoIcon />
        <RunningBar $left={0} $w={40} />
      </TaskSlot>
      <TraySpacer />
      <TaskSlot $w={26}>
        <SunIcon />
      </TaskSlot>
      <TrayText $w={45} $size={14}>
        32°C
      </TrayText>
      <TaskSlot $w={32}>
        <ChevronUp size={17} strokeWidth={1.3} />
      </TaskSlot>
      <TaskSlot $w={16}>
        <CloudMuted />
      </TaskSlot>
      <TaskSlot $w={32}>
        <GlobeOff />
      </TaskSlot>
      <TaskSlot $w={14}>
        <Volume2 size={16} strokeWidth={1.2} />
      </TaskSlot>
      <TrayText $w={47}>ENG</TrayText>
      <Clock>
        <span>21:30</span>
        <span>19-04-2023</span>
      </Clock>
      <TaskSlot $w={54}>
        <NoteIcon />
        <Badge>1</Badge>
      </TaskSlot>
    </Taskbar>
    <Watermark>
      <WatermarkBig>Activate Windows</WatermarkBig>
      <WatermarkSmall>Go to Settings to activate Windows.</WatermarkSmall>
    </Watermark>
  </Page>
);

export default App;
